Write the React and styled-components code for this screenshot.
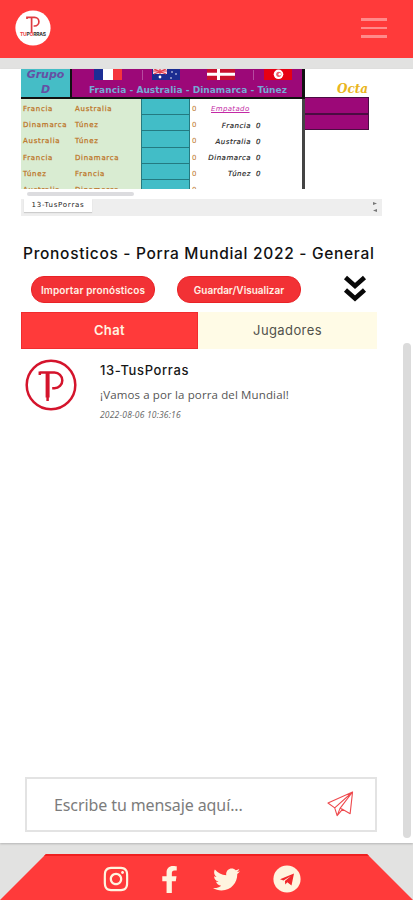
import React from "react";
import styled, { createGlobalStyle } from "styled-components";
import { FaFacebookF, FaInstagram, FaTwitter } from "react-icons/fa";

const MATCHES = [
  ["Francia", "Australia"],
  ["Dinamarca", "Túnez"],
  ["Australia", "Túnez"],
  ["Francia", "Dinamarca"],
  ["Túnez", "Francia"],
  ["Australia", "Dinamarca"],
];

const STANDINGS = ["Francia", "Australia", "Dinamarca", "Túnez"];

function BrandMark() {
  return (
    <svg width="36" height="36" viewBox="0 0 36 36">
      <circle cx="18" cy="18" r="17.6" fill="#fff" />
      <path
        d="M12 7.4h7.6a4.3 4.3 0 0 1 0 8.6h-1M16.6 7.4v15.8M12 6.6v2.4"
        fill="none"
        stroke="#df3a40"
        strokeWidth="1.7"
      />
      <text x="5" y="25.6" fontSize="5" fontWeight="700" fill="#333" textLength="26">
        <tspan fill="#ee4248">TU</tspan>P<tspan fill="#ee4248">O</tspan>RRAS
      </text>
    </svg>
  );
}

function Avatar() {
  return (
    <svg width="52" height="52" viewBox="0 0 52 52">
      <circle cx="26" cy="26" r="24.3" fill="#fff" stroke="#d4142c" strokeWidth="2.5" />
      <path
        d="M14.8 13.6H29.5a7.8 7.8 0 0 1 0 15.6h-2.3M14.8 12.6v3.4M22.6 38v4"
        fill="none"
        stroke="#d4142c"
        strokeWidth="2.5"
      />
      <path d="M22.6 14v24.5" stroke="#d4142c" strokeWidth="4" />
    </svg>
  );
}

function Flags() {
  return (
    <svg width="230" height="12" viewBox="72 69 230 12">
      <path d="M94 69h9v11h-9z" fill="#1d2e95" />
      <path d="M103 69h10v11h-10z" fill="#fff" />
      <path d="M113 69h9v11h-9z" fill="#f5353d" />
      <path d="M152 69h28v11h-28z" fill="#1b2c91" />
      <path d="M153 69h14v5h-14z" fill="#f3d9e4" />
      <path d="M153 71h14M160 69v5M154 69l12 5M166 69l-12 5" stroke="#e2414f" strokeWidth="1.2" />
      <g fill="#fff">
        <circle cx="160" cy="77" r="1.4" />
        <circle cx="172" cy="72" r=".8" />
        <circle cx="176" cy="74" r=".8" />
        <circle cx="171" cy="78" r=".8" />
      </g>
      <path d="M207 69h28v11h-28z" fill="#c8102e" />
      <path d="M207 74.3h28M218.5 69v11" stroke="#fff" strokeWidth="3" />
      <path d="M264 69h28v11h-28z" fill="#e70013" />
      <circle cx="278.5" cy="74.3" r="4.8" fill="#fff" />
      <circle cx="278.8" cy="74.3" r="2.6" fill="#ee5f68" />
      <circle cx="279.8" cy="74.3" r="1.3" fill="#fff" />
      <path d="M142.5 70v10M253.5 70v10" stroke="#b64ba0" />
    </svg>
  );
}

function Porra() {
  return (
    <Sheet>
      <Grid>
        <Group>
          <span>Grupo</span>
          <span>D</span>
        </Group>
        <GroupHeader>
          <Flags />
          <Teams>Francia - Australia - Dinamarca - Túnez</Teams>
        </GroupHeader>
        <Stage>
          <i>Octa</i>
        </Stage>
        <Matches>
          {MATCHES.map(([home, away], i) => (
            <Match key={i}>
              <Team $width={52}>{home}</Team>
              <Team $width={68}>{away}</Team>
              <Score />
              <Goals>0</Goals>
            </Match>
          ))}
        </Matches>
        <Standings>
          <Tied>Empatado</Tied>
          {STANDINGS.map((team) => (
            <Standing key={team}>
              <span>{team}</span>
              <span>0</span>
            </Standing>
          ))}
        </Standings>
        <Bracket>
          <Slot />
          <Slot />
        </Bracket>
      </Grid>
      <SheetScroll />
      <SheetTabs>
        <SheetTab>13-TusPorras</SheetTab>
        <Steppers viewBox="0 0 6 14">
          <path d="M1 2l4 1.5L1 5zM5 9l-4 1.5L5 12z" fill="#777" />
        </Steppers>
      </SheetTabs>
    </Sheet>
  );
}

function App() {
  return (
    <Page>
      <GlobalStyle />
      <Header>
        <BrandMark />
        <Burger>
          <span />
          <span />
          <span />
        </Burger>
      </Header>
      <Content>
        <Main>
          <Porra />
          <Title>Pronosticos - Porra Mundial 2022 - General</Title>
          <Actions>
            <PillButton $spacing="0.14px">Importar pronósticos</PillButton>
            <PillButton $spacing="0px">Guardar/Visualizar</PillButton>
            <svg width="24" height="28" viewBox="0 0 24 28">
              <path
                d="M2.5 2.5l9.5 8.5 9.5-8.5M2.5 15l9.5 8.5 9.5-8.5"
                fill="none"
                stroke="#080808"
                strokeWidth="4.6"
              />
            </svg>
          </Actions>
          <Tabs>
            <Tab $active>Chat</Tab>
            <Tab>Jugadores</Tab>
          </Tabs>
          <Message>
            <Avatar />
            <div>
              <Author>13-TusPorras</Author>
              <Body>¡Vamos a por la porra del Mundial!</Body>
              <Time>2022-08-06 10:36:16</Time>
            </div>
          </Message>
          <Composer>
            <span>Escribe tu mensaje aquí...</span>
            <svg width="27" height="27" viewBox="0 0 28 28">
              <path
                d="M1 12.5L26.5 1 24 23.5l-8-4.5-5.5 6.5-2.5-8zM26.5 1L8 17.5M26.5 1L13.5 18l2.5 1M10.5 25.5l3-7.5M1 12.5l7 5"
                fill="none"
                stroke="#ee4a4e"
                strokeWidth="1.15"
                strokeLinejoin="round"
              />
            </svg>
          </Composer>
        </Main>
        <ScrollThumb />
      </Content>
      <Footer>
        <Social>
          <FaInstagram size={28} />
          <FaFacebookF size={27} />
          <FaTwitter size={27} />
          <svg width="28" height="28" viewBox="0 0 28 28">
            <circle cx="14" cy="14" r="13.6" fill="currentColor" />
            <path d="M7 14.2L21 8.5l-2.5 12-4.2-3.2-2 2.2-.4-3.6 6-5-7.4 4.6z" fill="#f0282c" />
          </svg>
        </Social>
      </Footer>
    </Page>
  );
}

export default App;

const GlobalStyle = createGlobalStyle`
  * {
    box-sizing: border-box;
  }

  body {
    margin: 0;
    font-family: "Inter", "Open Sans", sans-serif;
  }

  svg {
    display: block;
    flex: none;
  }
`;

const Page = styled.div`
  display: flex;
  flex-direction: column;
  height: 900px;
  background: #e2e2e1;
  overflow: hidden;
`;

const Header = styled.header`
  display: flex;
  align-items: center;
  justify-content: space-between;
  height: 58px;
  padding: 0 26px 2px 15px;
  background: #ff3a3a;
  flex: none;
`;

const Burger = styled.div`
  display: flex;
  flex-direction: column;
  gap: 6px;
  width: 26px;

  span {
    height: 2.6px;
    background: #ff8a8a;
  }
`;

const Content = styled.div`
  display: flex;
  justify-content: space-between;
  height: 774px;
  margin-top: 11px;
  background: #fff;
  box-shadow: 0 1px 2px rgba(0, 0, 0, 0.2);
`;

const Main = styled.main`
  display: flex;
  flex-direction: column;
  width: 382px;
  padding-left: 21px;
`;

const ScrollThumb = styled.div`
  width: 8px;
  height: 495px;
  margin: 274px 2px 0 0;
  border-radius: 4px;
  background: #dbdbdb;
`;

const Sheet = styled.section`
  height: 147px;
  font-family: "DejaVu Sans", sans-serif;
`;

const Grid = styled.div`
  display: grid;
  grid-template-columns: 51px 233px 64px;
  grid-template-rows: 30px 90px;
  height: 120px;
  overflow: hidden;
`;

const Group = styled.div`
  display: flex;
  flex-direction: column;
  align-items: center;
  border-right: 2px solid #111;
  border-bottom: 2px solid #111;
  background: #45bdc6;
  color: #6550a4;
  font-size: 11px;
  font-weight: 700;
  font-style: italic;
  line-height: 15px;

  span:first-child {
    margin-top: -2px;
  }
`;

const GroupHeader = styled.div`
  border-right: 3px solid #111;
  border-bottom: 2px solid #111;
  background: #9c0878;
`;

const Teams = styled.div`
  margin-top: 2px;
  padding-left: 17px;
  color: #75a9d5;
  font-size: 9px;
  font-weight: 700;
  line-height: 15px;
  letter-spacing: 0.04px;
  white-space: nowrap;
`;

const Stage = styled.div`
  padding: 14px 0 0 32px;
  color: #e9b520;
  font-family: "DejaVu Serif", serif;
  font-size: 12px;
  font-weight: 700;
  line-height: 13px;
  overflow: hidden;
`;

const Matches = styled.div`
  grid-column: 1 / 2;
  width: 178px;
`;

const Match = styled.div`
  display: flex;
  height: 16.2px;
  background: linear-gradient(90deg, #d9ecd2 120px, #fff 120px);
`;

const Team = styled.div`
  width: ${(p) => p.$width}px;
  padding: 3px 0 0 2px;
  color: #bd7427;
  font-size: 7px;
  -webkit-text-stroke: 0.25px #bd7427;
  line-height: 14px;
  letter-spacing: 0.7px;
`;

const Score = styled.div`
  width: 49px;
  border: solid #247a81;
  border-width: 0 1px 1.5px;
  background: #42bdc7;
`;

const Goals = styled.div`
  padding: 3px 0 0 2px;
  color: #bd7427;
  font-size: 7px;
  line-height: 14px;
`;

const Standings = styled.div`
  margin-left: 127px;
  padding-top: 3px;
  border-right: 3px solid #444;
  color: #222;
  font-size: 7px;
  font-style: italic;
  letter-spacing: 0.5px;
`;

const Tied = styled.div`
  height: 16px;
  padding-left: 12px;
  color: #c329a5;
  line-height: 14px;
  letter-spacing: 0.35px;
  text-decoration: underline;
`;

const Standing = styled.div`
  display: flex;
  justify-content: flex-end;
  gap: 5px;
  height: 16px;
  padding-right: 41px;
  line-height: 16px;
  -webkit-text-stroke: 0.15px #222;
`;

const Bracket = styled.div`
  margin-top: -2px;
`;

const Slot = styled.div`
  height: 16.5px;
  border: solid #4a0c42;
  border-width: 1px 1px 1px 0;
  background: #9c0878;
`;

const SheetScroll = styled.div`
  width: 107px;
  height: 4px;
  margin: 3px 0 3px 6px;
  border-radius: 2px;
  background: #dcdcdf;
`;

const SheetTabs = styled.div`
  display: flex;
  justify-content: space-between;
  height: 17px;
  padding: 0 4px 0 3px;
  background: #eee;
`;

const SheetTab = styled.div`
  width: 68px;
  height: 13px;
  background: #fff;
  box-shadow: 0 1px 1px #ccc;
  color: #222;
  font-size: 7px;
  line-height: 13px;
  text-align: center;
  letter-spacing: 0.75px;
`;

const Steppers = styled.svg`
  width: 6px;
  height: 14px;
  margin-top: 1px;
`;

const Title = styled.h1`
  margin: 26px 0 0 2px;
  color: #111;
  font-size: 15.5px;
  font-weight: 500;
  line-height: 24px;
  letter-spacing: 0.69px;
  white-space: nowrap;
`;

const Actions = styled.div`
  display: flex;
  height: 27px;
  margin: 10px 0 0 10px;

  svg {
    margin: -1px 0 0 42px;
  }
`;

const PillButton = styled.button`
  width: 124px;
  height: 27px;
  padding: 0;
  border: 1px solid #e92226;
  border-radius: 13px;
  background: #f23135;
  color: #fff1e6;
  font-family: inherit;
  font-size: 10px;
  font-weight: 600;
  letter-spacing: ${(p) => p.$spacing};

  & + & {
    margin-left: 22px;
  }
`;

const Tabs = styled.div`
  display: grid;
  grid-template-columns: 177px 179px;
  height: 37px;
  margin-top: 9px;
`;

const Tab = styled.div`
  height: 37px;
  border: 1px solid ${(p) => (p.$active ? "#f02c2e" : "#fffbe6")};
  background: ${(p) => (p.$active ? "#ff3a3a" : "#fffbe6")};
  color: ${(p) => (p.$active ? "#fff3e0" : "#51514b")};
  font-size: 13px;
  font-weight: ${(p) => (p.$active ? 600 : 400)};
  line-height: 34px;
  letter-spacing: 0.4px;
  text-align: center;
`;

const Message = styled.article`
  display: flex;
  gap: 23px;
  margin: 10px 0 0 4px;
`;

const Author = styled.h2`
  margin: 2px 0 0;
  color: #171717;
  font-size: 13px;
  font-weight: 500;
  line-height: 18px;
  letter-spacing: 0.62px;
`;

const Body = styled.p`
  margin: 8px 0 0;
  color: #555;
  font-family: "Open Sans", sans-serif;
  font-size: 11.5px;
  line-height: 16px;
  letter-spacing: 0.13px;
`;

const Time = styled.time`
  display: block;
  margin-top: 4px;
  color: #666;
  font-family: "Open Sans", sans-serif;
  font-size: 8.5px;
  font-style: italic;
  line-height: 16px;
  letter-spacing: 0.18px;
`;

const Composer = styled.div`
  display: flex;
  align-items: center;
  justify-content: space-between;
  width: 352px;
  height: 55px;
  margin: auto 0 11px 4px;
  padding: 0 21px 0 27px;
  border: 2px solid #e3e3e3;
  color: #7c7c7c;
  font-family: "Noto Sans", sans-serif;
  font-size: 16px;
  letter-spacing: -0.1px;
`;

const Footer = styled.footer`
  height: 46px;
  margin-top: auto;
  border-top: 2px solid #ef2020;
  background: #ff3a3a;
  clip-path: polygon(46px 0, 367px 0, 413px 46px, 0 46px);
`;

const Social = styled.div`
  display: flex;
  align-items: center;
  gap: 31px;
  height: 46px;
  margin-left: 102px;
  color: #fff4df;

  svg:nth-child(2) {
    margin: 0 -1px 0 -5px;
  }

  svg:nth-child(3) {
    margin-right: 2px;
  }
`;
